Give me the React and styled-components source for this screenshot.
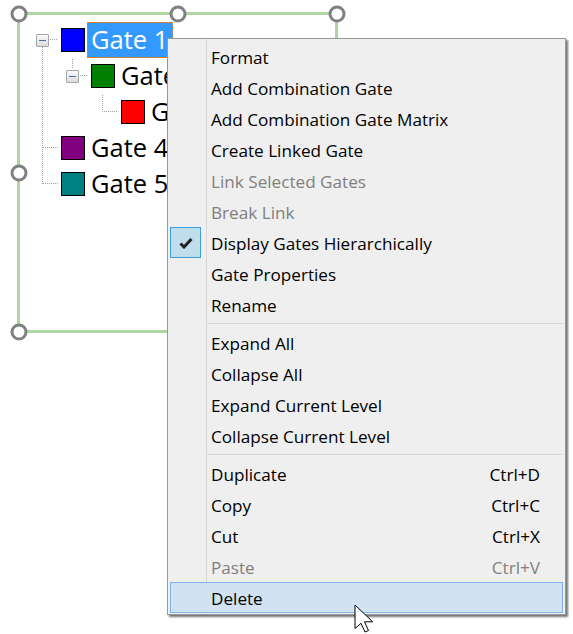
import React from "react";
import styled, { createGlobalStyle } from "styled-components";

const Global = createGlobalStyle`
  html, body { margin: 0; padding: 0; background: #fff; }
  body { font-family: "Open Sans", "Liberation Sans", sans-serif; }
`;

const Page = styled.div`
  position: relative;
  width: 573px;
  height: 634px;
  overflow: hidden;
  background: #fff;
`;

const SelectionFrame = styled.div`
  position: absolute;
  left: 17px;
  top: 12px;
  width: 321px;
  height: 321px;
  box-sizing: border-box;
  border: 3px solid #aed6a0;
`;

const Handle = styled.span`
  position: absolute;
  left: ${(p) => p.$x}px;
  top: ${(p) => p.$y}px;
  width: 17px;
  height: 17px;
  box-sizing: border-box;
  border: 3.5px solid #808080;
  border-radius: 50%;
  background: #fff;
  transform: translate(-50%, -50%);
`;

const Tree = styled.ul`
  position: relative;
  list-style: none;
  margin: 0;
  padding: 7px 0 0;
`;

const Connectors = styled.svg`
  position: absolute;
  left: 0;
  top: 0;
  width: 180px;
  height: 187px;
  pointer-events: none;
`;

const Row = styled.li`
  display: flex;
  align-items: center;
  height: 36px;
  padding-left: ${(p) => 16 + p.$level * 30}px;
`;

const ExpanderSlot = styled.span`
  flex: 0 0 25px;
  height: 13px;
  display: flex;
`;

const Expander = styled.span`
  position: relative;
  width: 13px;
  height: 13px;
  box-sizing: border-box;
  border: 1px solid #a6a6a6;
  border-radius: 1px;
  background: linear-gradient(#fafafa, #dcdcdc);
  &::after {
    content: "";
    position: absolute;
    left: 2px;
    right: 2px;
    top: 5px;
    height: 1px;
    background: #4a6aa8;
  }
`;

const Swatch = styled.span`
  flex: 0 0 24px;
  height: 24px;
  box-sizing: border-box;
  border: 1px solid #000;
  background: ${(p) => p.$color};
`;

const Label = styled.span`
  flex: none;
  margin-left: 2px;
  height: 36px;
  box-sizing: border-box;
  padding: 0 5px 0 4px;
  font-size: 25.5px;
  line-height: 35px;
  white-space: nowrap;
  color: ${(p) => (p.$selected ? "#fff" : "#000")};
  background: ${(p) => (p.$selected ? "#3399ff" : "transparent")};
  outline: ${(p) => (p.$selected ? "1px dotted #d98a3d" : "none")};
  outline-offset: -1px;
`;

const Menu = styled.div`
  position: absolute;
  left: 167px;
  top: 38px;
  width: 399px;
  height: 577px;
  box-sizing: border-box;
  padding: 2px;
  border: 1px solid #979797;
  background: #efefef;
  box-shadow: 2px 2px 2px rgba(0, 0, 0, 0.55);
  &::before {
    content: "";
    position: absolute;
    left: 38px;
    top: 0;
    bottom: 0;
    width: 1px;
    background: #d7d7d7;
  }
`;

const Item = styled.div`
  position: relative;
  display: flex;
  align-items: center;
  justify-content: space-between;
  height: 31px;
  box-sizing: border-box;
  padding: 1px 23px 0 41px;
  font-size: 17.15px;
  color: ${(p) => (p.$disabled ? "#808080" : "#000")};
  ${(p) =>
    p.$active &&
    `
    background: #d1e2f2;
    outline: 1px solid #7eb4ea;
    outline-offset: -1px;
  `}
`;

const CheckBox = styled.span`
  position: absolute;
  left: 0;
  top: 0;
  width: 31px;
  height: 31px;
  box-sizing: border-box;
  border: 1px solid #3a9fdc;
  background: #c0ddec;
  display: flex;
  align-items: center;
  justify-content: center;
`;

const Separator = styled.div`
  height: 1px;
  margin: 3px 0 3px 37px;
  background: #d7d7d7;
`;

const Cursor = styled.svg`
  position: absolute;
  left: 354px;
  top: 604px;
  width: 21px;
  height: 29px;
`;

const rows = [
  { name: "Gate 1", color: "#0000ff", level: 0, expander: true, selected: true },
  { name: "Gate 2", color: "#008000", level: 1, expander: true },
  { name: "Gate 3", color: "#ff0000", level: 2 },
  { name: "Gate 4", color: "#800080", level: 0 },
  { name: "Gate 5", color: "#008080", level: 0 },
];

const groups = [
  [
    { label: "Format" },
    { label: "Add Combination Gate" },
    { label: "Add Combination Gate Matrix" },
    { label: "Create Linked Gate" },
    { label: "Link Selected Gates", disabled: true },
    { label: "Break Link", disabled: true },
    { label: "Display Gates Hierarchically", checked: true },
    { label: "Gate Properties" },
    { label: "Rename" },
  ],
  [
    { label: "Expand All" },
    { label: "Collapse All" },
    { label: "Expand Current Level" },
    { label: "Collapse Current Level" },
  ],
  [
    { label: "Duplicate", shortcut: "Ctrl+D" },
    { label: "Copy", shortcut: "Ctrl+C" },
    { label: "Cut", shortcut: "Ctrl+X" },
    { label: "Paste", shortcut: "Ctrl+V", disabled: true },
    { label: "Delete", active: true },
  ],
];

const handles = [
  [-1.5, -1.5],
  [157.5, -1.5],
  [316.5, -1.5],
  [-1.5, 157.5],
  [-1.5, 316.5],
];

export default function App() {
  return (
    <Page>
      <Global />
      <SelectionFrame>
        <Tree>
          <Connectors viewBox="20 15 180 187">
            <path
              d="M42.5 47V184M50 39.5H58M43 147.5H58M43 183.5H58M72.5 59V68M80 75.5H88M102.5 95V111.5H118"
              fill="none"
              stroke="#a0a0a0"
              strokeDasharray="1 1"
            />
          </Connectors>
          {rows.map((r) => (
            <Row key={r.name} $level={r.level}>
              <ExpanderSlot>{r.expander && <Expander />}</ExpanderSlot>
              <Swatch $color={r.color} />
              <Label $selected={r.selected}>{r.name}</Label>
            </Row>
          ))}
        </Tree>
        {handles.map(([x, y]) => (
          <Handle key={`${x}-${y}`} $x={x} $y={y} />
        ))}
      </SelectionFrame>
      <Menu>
        {groups.map((group, i) => (
          <React.Fragment key={i}>
            {i > 0 && <Separator />}
            {group.map((it) => (
              <Item key={it.label} $disabled={it.disabled} $active={it.active}>
                {it.checked && (
                  <CheckBox>
                    <svg width="14" height="12" viewBox="0 0 14 12">
                      <path d="M1.5 6.5L5 10L12.5 2" fill="none" stroke="#222" strokeWidth="3" />
                    </svg>
                  </CheckBox>
                )}
                <span>{it.label}</span>
                {it.shortcut && <span>{it.shortcut}</span>}
              </Item>
            ))}
          </React.Fragment>
        ))}
      </Menu>
      <Cursor viewBox="0 0 21 29">
        <path
          d="M1 1V24.5L7 19.3L11 28L14.5 26.5L10.5 17.8H18.7Z"
          fill="#fff"
          stroke="#000"
          strokeWidth="1"
        />
      </Cursor>
    </Page>
  );
}
